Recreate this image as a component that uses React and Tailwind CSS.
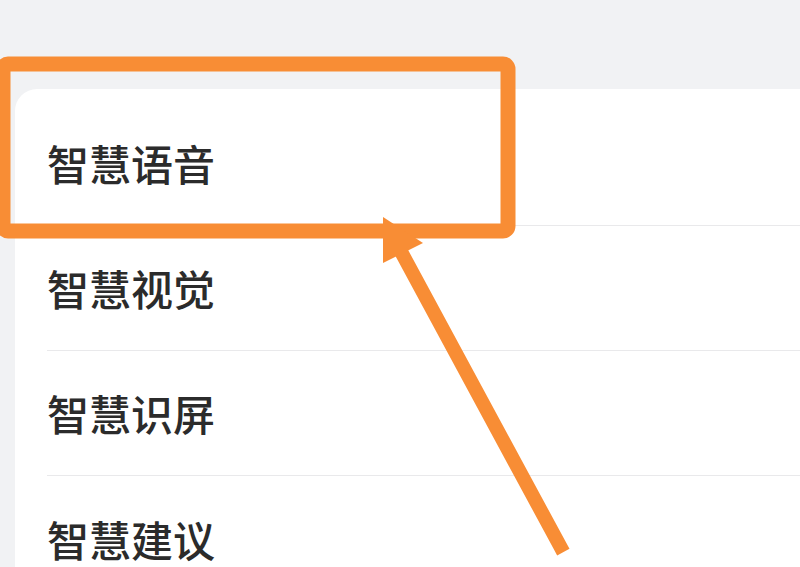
import React from "react";

const items = ["智慧语音", "智慧视觉", "智慧识屏", "智慧建议"];

export default function App() {
  return (
    <div className="relative h-[567px] w-[800px] overflow-hidden bg-[#f1f2f4] font-['Noto_Sans_CJK_SC',sans-serif]">
      <div className="pt-[89px] pl-[15px]">
        <div className="rounded-tl-[22px] bg-white pt-[12px]">
          {items.map((t, i) => (
            <div key={t} className="pl-[32px]">
              <div
                className={
                  "flex h-[125px] items-center " +
                  (i < items.length - 1 ? "border-b border-[#e9e9eb]" : "")
                }
              >
                <span className="text-[42px] font-medium leading-none text-[#2b2b2b]">{t}</span>
              </div>
            </div>
          ))}
        </div>
      </div>
      <svg className="absolute left-0 top-0" width="800" height="567" viewBox="0 0 800 567">
        <rect x="3" y="64" width="505" height="167" rx="5" fill="none" stroke="#f88d35" strokeWidth="15" />
        <line x1="560" y1="546" x2="398" y2="246" stroke="#f88d35" strokeWidth="14" strokeLinecap="square" />
        <polygon points="383,217 383,263 423,243" fill="#f88d35" />
      </svg>
    </div>
  );
}
